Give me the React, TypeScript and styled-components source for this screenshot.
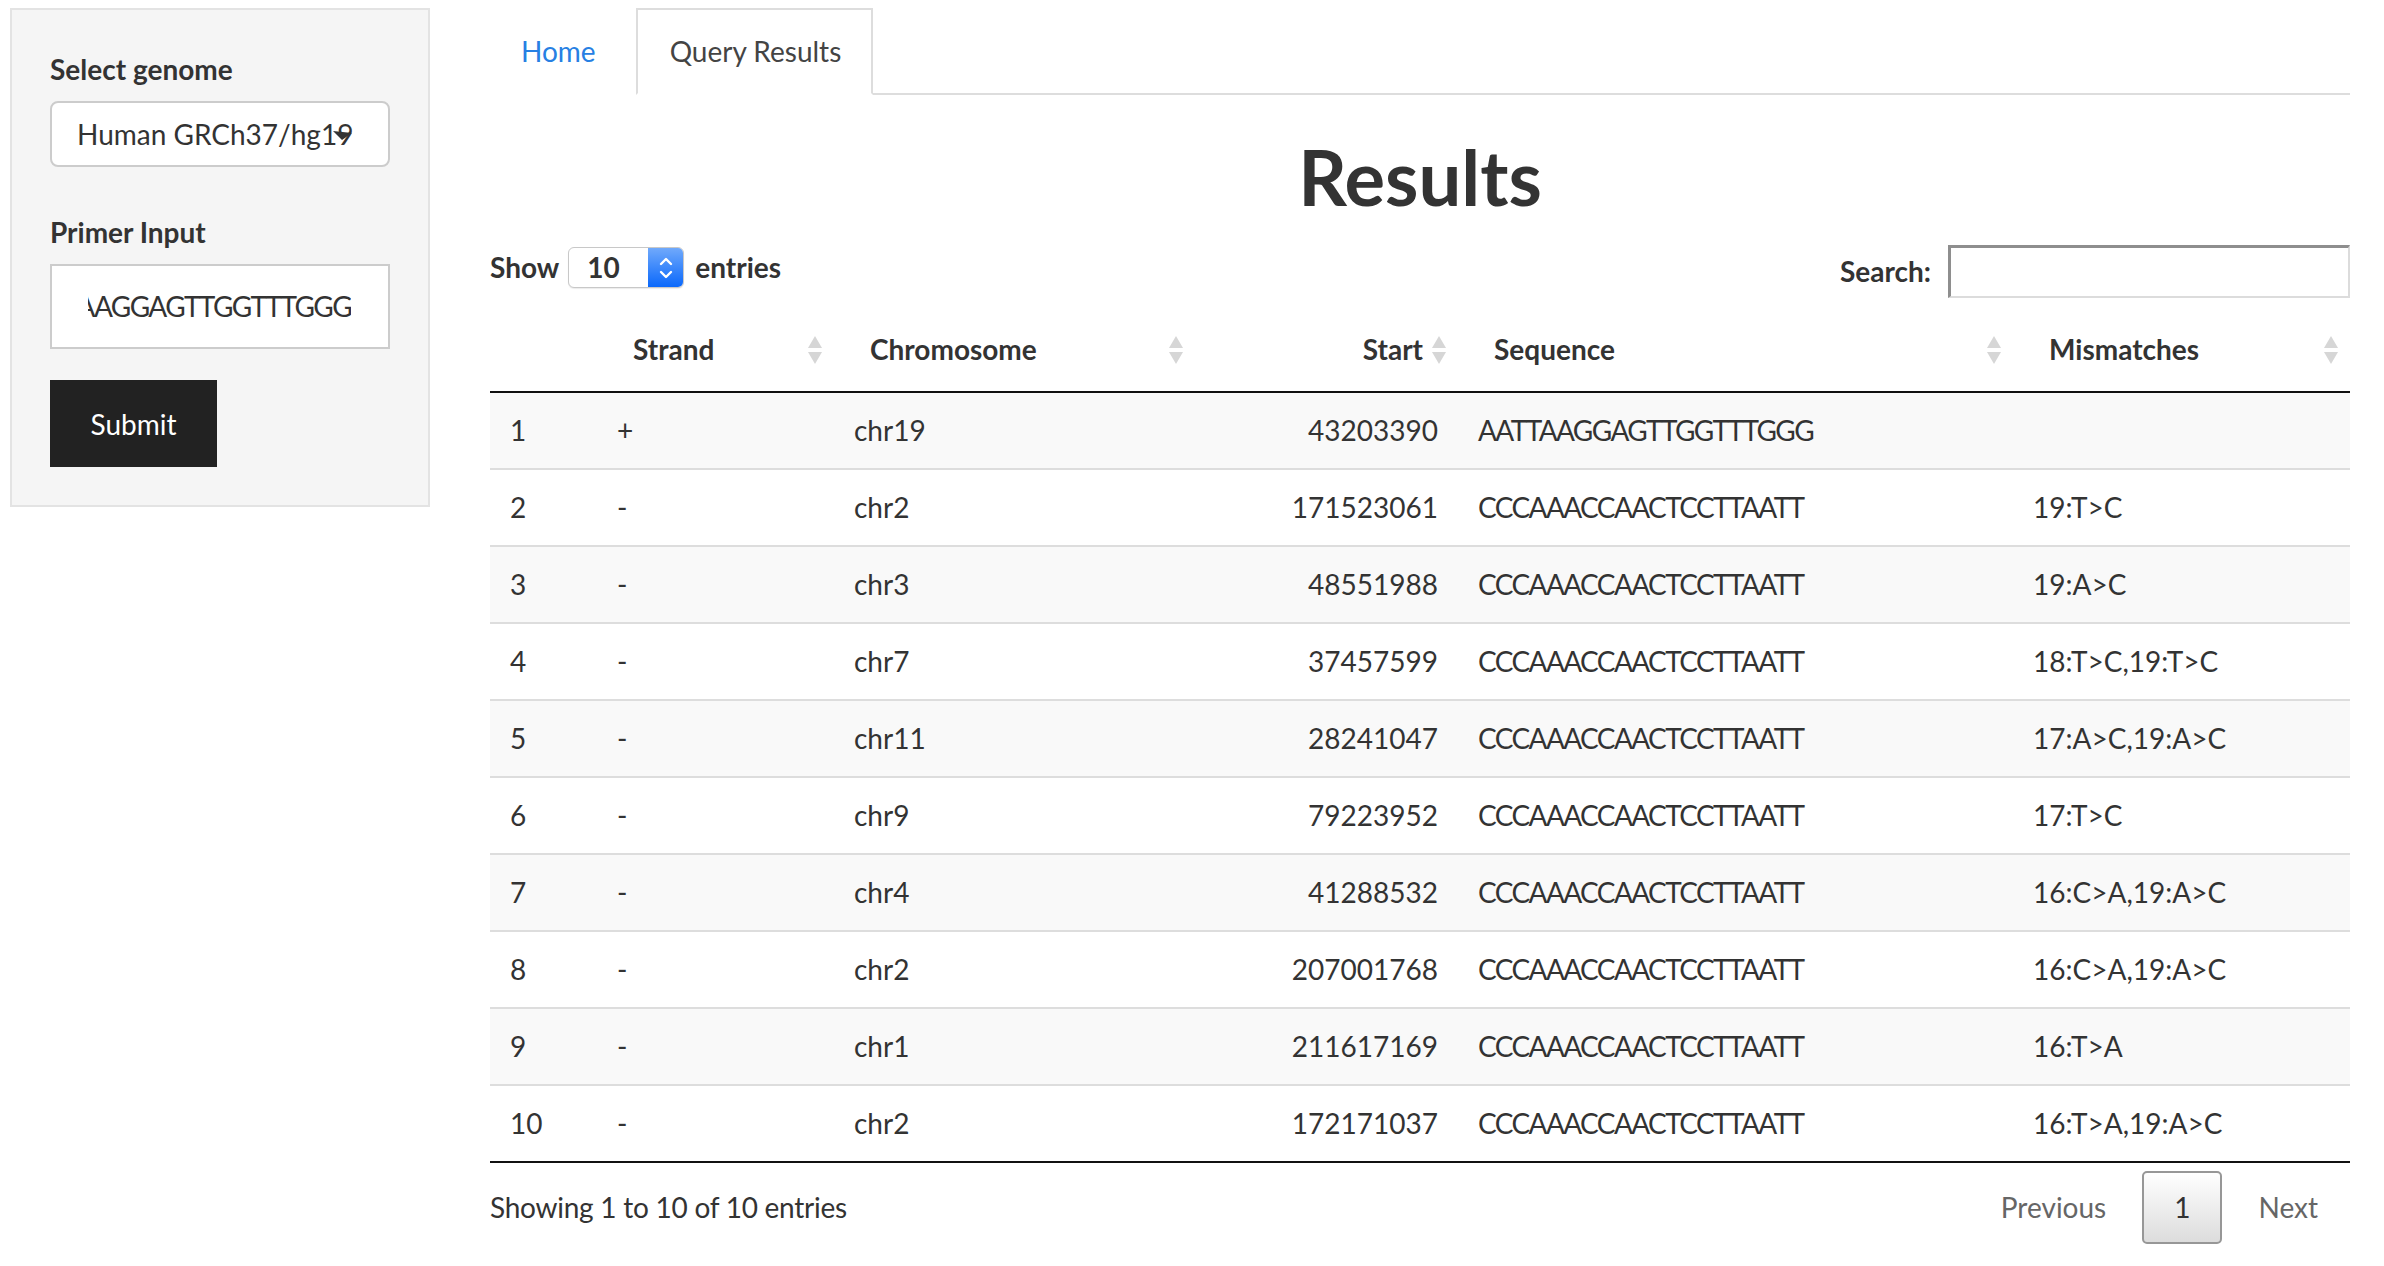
import React from "react";
import styled, { createGlobalStyle } from "styled-components";

const GlobalStyle = createGlobalStyle`
  html, body {
    margin: 0;
    padding: 0;
    background: #fff;
  }
  body {
    font-family: Lato, "Open Sans", sans-serif;
    font-size: 28px;
    line-height: 43px;
    color: #333;
  }
  * {
    box-sizing: border-box;
  }
`;

type Row = {
  strand: string;
  chr: string;
  start: string;
  seq: string;
  mism: string;
};

const rows: Row[] = [
  { strand: "+", chr: "chr19", start: "43203390", seq: "AATTAAGGAGTTGGTTTGGG", mism: "" },
  { strand: "-", chr: "chr2", start: "171523061", seq: "CCCAAACCAACTCCTTAATT", mism: "19:T>C" },
  { strand: "-", chr: "chr3", start: "48551988", seq: "CCCAAACCAACTCCTTAATT", mism: "19:A>C" },
  { strand: "-", chr: "chr7", start: "37457599", seq: "CCCAAACCAACTCCTTAATT", mism: "18:T>C,19:T>C" },
  { strand: "-", chr: "chr11", start: "28241047", seq: "CCCAAACCAACTCCTTAATT", mism: "17:A>C,19:A>C" },
  { strand: "-", chr: "chr9", start: "79223952", seq: "CCCAAACCAACTCCTTAATT", mism: "17:T>C" },
  { strand: "-", chr: "chr4", start: "41288532", seq: "CCCAAACCAACTCCTTAATT", mism: "16:C>A,19:A>C" },
  { strand: "-", chr: "chr2", start: "207001768", seq: "CCCAAACCAACTCCTTAATT", mism: "16:C>A,19:A>C" },
  { strand: "-", chr: "chr1", start: "211617169", seq: "CCCAAACCAACTCCTTAATT", mism: "16:T>A" },
  { strand: "-", chr: "chr2", start: "172171037", seq: "CCCAAACCAACTCCTTAATT", mism: "16:T>A,19:A>C" },
];

// column widths (px), sum = 1860
const colWidths = [107, 237, 361, 263, 555, 337];

function SortIcon() {
  return (
    <svg width="16" height="30" viewBox="0 0 16 30">
      <polygon points="8,1 15,13 1,13" fill="#d6d6d6" />
      <polygon points="1,17 15,17 8,29" fill="#d6d6d6" />
    </svg>
  );
}

export default function App() {
  return (
    <>
      <GlobalStyle />
      <Page>
        <Sidebar>
          <FormGroup $gap={44}>
            <Label>Select genome</Label>
            <SelectBox>
              Human GRCh37/hg19
              <Caret width="19" height="9" viewBox="0 0 19 9">
                <polygon points="0,0 19,2 9,9" fill="#333" />
              </Caret>
            </SelectBox>
          </FormGroup>
          <FormGroup $gap={31}>
            <Label>Primer Input</Label>
            <TextInput>
              <InputClip>
                <Seq>AATTAAGGAGTTGGTTTGGG</Seq>
              </InputClip>
            </TextInput>
          </FormGroup>
          <SubmitButton type="button">Submit</SubmitButton>
        </Sidebar>

        <Main>
          <Tabs>
            <Tab>Home</Tab>
            <Tab $active>Query Results</Tab>
          </Tabs>

          <Heading>Results</Heading>

          <Controls>
            <LengthGroup>
              Show
              <LengthSelect>
                <LengthValue>10</LengthValue>
                <Stepper>
                  <svg width="16" height="28" viewBox="0 0 16 28">
                    <polyline points="3,10 8,5 13,10" fill="none" stroke="#fff" strokeWidth="2.4" strokeLinecap="round" strokeLinejoin="round" />
                    <polyline points="3,18 8,23 13,18" fill="none" stroke="#fff" strokeWidth="2.4" strokeLinecap="round" strokeLinejoin="round" />
                  </svg>
                </Stepper>
              </LengthSelect>
              entries
            </LengthGroup>
            <SearchGroup>
              Search:
              <SearchInput />
            </SearchGroup>
          </Controls>

          <Table>
            <colgroup>
              {colWidths.map((w, i) => (
                <col key={i} style={{ width: w }} />
              ))}
            </colgroup>
            <thead>
              <tr>
                <Th />
                <Th>
                  <ThInner>Strand<SortIcon /></ThInner>
                </Th>
                <Th>
                  <ThInner>Chromosome<SortIcon /></ThInner>
                </Th>
                <Th>
                  <ThInner $right>Start<SortIcon /></ThInner>
                </Th>
                <Th>
                  <ThInner>Sequence<SortIcon /></ThInner>
                </Th>
                <Th>
                  <ThInner>Mismatches<SortIcon /></ThInner>
                </Th>
              </tr>
            </thead>
            <tbody>
              {rows.map((r, i) => (
                <Tr key={i} $odd={i % 2 === 0}>
                  <Td>{i + 1}</Td>
                  <Td>{r.strand}</Td>
                  <Td>{r.chr}</Td>
                  <Td $right>{r.start}</Td>
                  <Td>
                    <Seq>{r.seq}</Seq>
                  </Td>
                  <Td>{r.mism}</Td>
                </Tr>
              ))}
            </tbody>
          </Table>

          <Footer>
            <Info>Showing 1 to 10 of 10 entries</Info>
            <Pagination>
              <PageButton>Previous</PageButton>
              <PageButton $current>1</PageButton>
              <PageButton>Next</PageButton>
            </Pagination>
          </Footer>
        </Main>
      </Page>
    </>
  );
}

const Page = styled.div`
  display: flex;
  align-items: flex-start;
  gap: 60px;
  padding: 8px 0 0 10px;
`;

const Sidebar = styled.form`
  width: 420px;
  flex: none;
  background: #f5f5f5;
  border: 2px solid #e3e3e3;
  padding: 38px;
`;

const FormGroup = styled.div<{ $gap: number }>`
  margin-bottom: ${(p) => p.$gap}px;
`;

const Label = styled.label`
  display: block;
  font-weight: 700;
  margin-bottom: 10px;
`;

const SelectBox = styled.div`
  position: relative;
  height: 66px;
  display: flex;
  align-items: center;
  padding-left: 25px;
  background: #fff;
  border: 2px solid #ccc;
  border-radius: 8px;
  white-space: nowrap;
`;

const Caret = styled.svg`
  position: absolute;
  right: 36px;
  top: 28px;
`;

const TextInput = styled.div`
  height: 85px;
  display: flex;
  align-items: center;
  background: #fff;
  border: 2px solid #ccc;
`;

const InputClip = styled.div`
  flex: 1;
  margin: 0 37px 0 36px;
  overflow: hidden;
  display: flex;
  justify-content: flex-end;
  white-space: nowrap;
`;

/* upper-case base sequences: the original face is narrower in caps */
const Seq = styled.span`
  letter-spacing: -1.6px;
`;

const SubmitButton = styled.button`
  display: block;
  width: 167px;
  height: 87px;
  border: none;
  background: #222;
  color: #fff;
  font-family: inherit;
  font-size: 28px;
  padding: 0;
`;

const Main = styled.div`
  width: 1860px;
  flex: none;
  display: flex;
  flex-direction: column;
`;

const Tabs = styled.div`
  display: flex;
  height: 87px;
  border-bottom: 2px solid #ddd;
`;

const Tab = styled.div<{ $active?: boolean }>`
  height: 87px;
  display: flex;
  align-items: center;
  padding: ${(p) => (p.$active ? "0 30px 0 32px" : "0 38px 0 29px")};
  color: ${(p) => (p.$active ? "#444" : "#2780e3")};
  background: #fff;
  border: 2px solid ${(p) => (p.$active ? "#ddd" : "transparent")};
  border-bottom-color: transparent;
  margin-bottom: -2px;
`;

const Heading = styled.h1`
  margin: 41px 0 0;
  font-size: 76px;
  line-height: 81px;
  font-weight: 700;
  text-align: center;
`;

const Controls = styled.div`
  margin-top: 28px;
  display: flex;
  justify-content: space-between;
  align-items: flex-start;
`;

const LengthGroup = styled.div`
  display: flex;
  align-items: center;
  height: 43px;
  margin-top: 1px;
  font-weight: 700;
`;

const LengthSelect = styled.div`
  display: flex;
  width: 116px;
  height: 41px;
  margin: 0 11px 0 9px;
  border: 1px solid #c8c8c8;
  border-radius: 6px;
  overflow: hidden;
  background: #fff;
  box-shadow: 0 1px 1px rgba(0, 0, 0, 0.08);
`;

const LengthValue = styled.div`
  flex: 1;
  display: flex;
  align-items: center;
  padding-left: 18px;
`;

const Stepper = styled.div`
  width: 35px;
  display: flex;
  align-items: center;
  justify-content: center;
  background: linear-gradient(to bottom, #70a9fb, #0a68fb);
`;

const SearchGroup = styled.div`
  display: flex;
  align-items: center;
  font-weight: 700;
`;

const SearchInput = styled.div`
  width: 402px;
  height: 53px;
  margin-left: 17px;
  background: #fff;
  border-style: solid;
  border-width: 3px 2px 2px 3px;
  border-color: #8e8e8e #dcdcdc #dcdcdc #8e8e8e;
`;

const Table = styled.table`
  margin-top: 10px;
  width: 1860px;
  table-layout: fixed;
  border-collapse: separate;
  border-spacing: 0;
  border-bottom: 2px solid #111;

  tbody tr + tr td {
    border-top: 2px solid #ddd;
  }
`;

const Th = styled.th`
  padding: 20px 11px 20px 36px;
  font-weight: 700;
  text-align: left;
  border-bottom: 2px solid #111;
`;

const ThInner = styled.div<{ $right?: boolean }>`
  display: flex;
  align-items: center;
  justify-content: ${(p) => (p.$right ? "flex-end" : "space-between")};
  gap: 8px;
  svg {
    flex: none;
  }
`;

const Tr = styled.tr<{ $odd: boolean }>`
  background: ${(p) => (p.$odd ? "#f9f9f9" : "#fff")};
`;

const Td = styled.td<{ $right?: boolean }>`
  padding: 16px 20px;
  text-align: ${(p) => (p.$right ? "right" : "left")};
  white-space: nowrap;
`;

const Footer = styled.div`
  display: flex;
  justify-content: space-between;
  align-items: flex-start;
`;

const Info = styled.div`
  padding-top: 23px;
  letter-spacing: -0.25px;
`;

const Pagination = styled.div`
  display: flex;
  padding-top: 8px;
`;

const PageButton = styled.div<{ $current?: boolean }>`
  height: 73px;
  display: flex;
  align-items: center;
  padding: 0 30px;
  margin-left: 4px;
  border: 2px solid ${(p) => (p.$current ? "#979797" : "transparent")};
  border-radius: 5px;
  color: ${(p) => (p.$current ? "#333" : "#666")};
  background: ${(p) => (p.$current ? "linear-gradient(to bottom, #fff 0%, #dcdcdc 100%)" : "transparent")};
`;
